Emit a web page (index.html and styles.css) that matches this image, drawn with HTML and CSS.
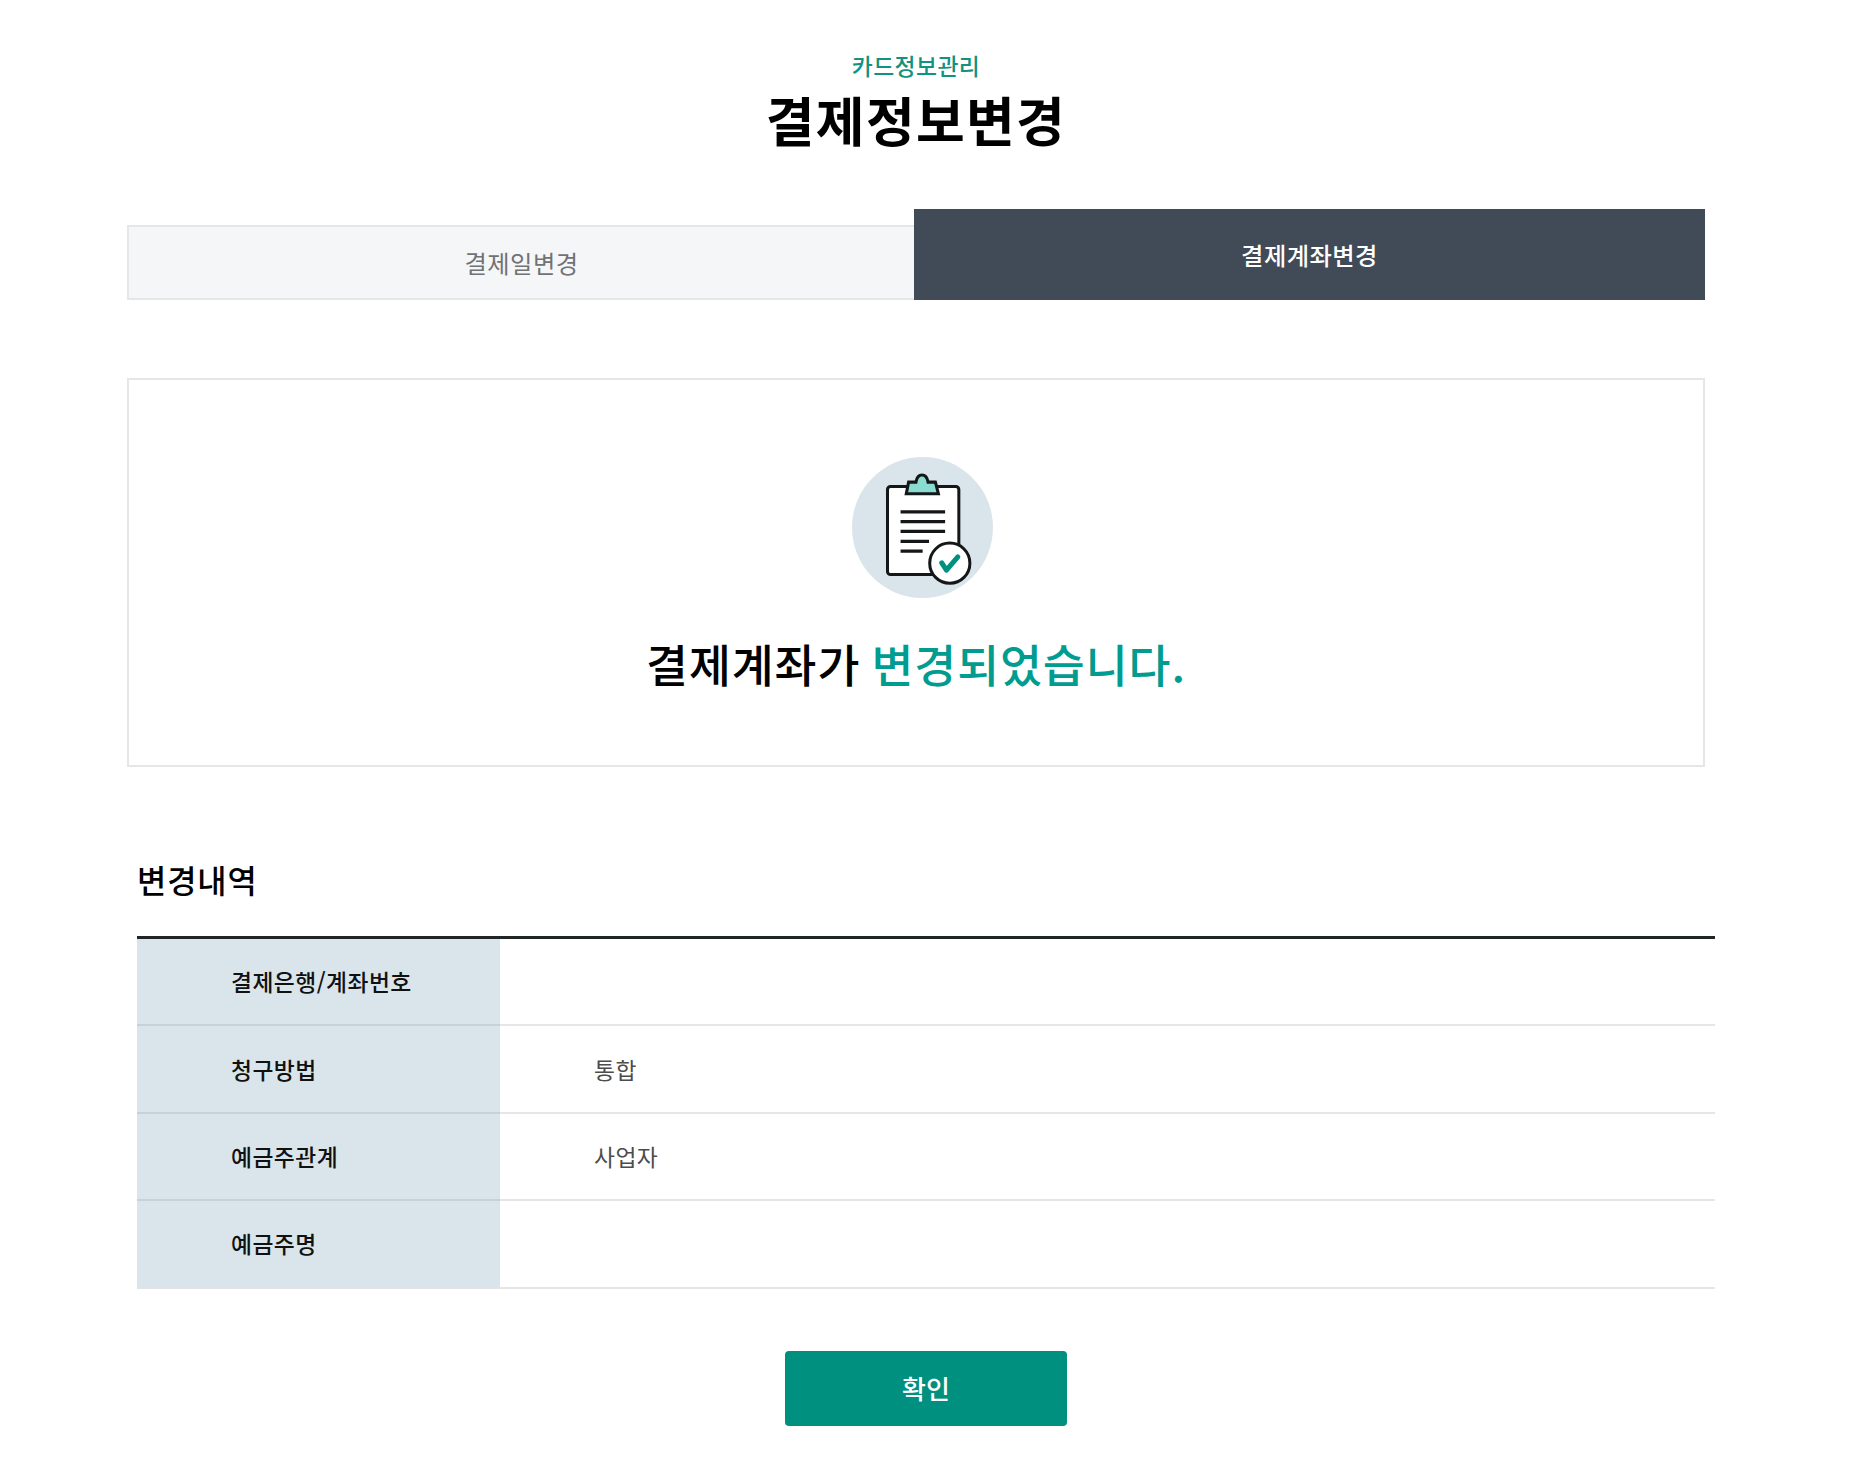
FILE: index.html
```html
<!DOCTYPE html>
<html lang="ko">

<head>
    <meta charset="UTF-8">
    <meta name="viewport" content="width=device-width, initial-scale=1.0">
    <title>결제정보변경</title>
    <link rel="stylesheet" href="styles.css">
</head>

<body>

    <div class="container">
        <header class="page-header">
            <p class="category">카드정보관리</p>
            <h1>결제정보변경</h1>
        </header>

        <nav>
            <ul class="tabs">
                <li><a href="#">결제일변경</a></li>
                <li class="active"><a href="#">결제계좌변경</a></li>
            </ul>
        </nav>

        <!-- 변경 완료 안내 -->
        <div class="result-box">
            <svg class="result-icon" viewBox="35 38 421 421" aria-hidden="true">
                <circle cx="245.500" cy="248.500" r="210.500" fill="#dae5eb"/>
                <g stroke="#141718" stroke-width="9">
                    <rect x="141" y="126" width="213" height="263" rx="9" fill="#fff"/>
                    <path d="M197 148 L204 113 H226 C228 101 232 92 244 92 C256 92 260 101 262 113 H284 L293 148 Z" fill="#8adcd0"/>
                    <path d="M180 202 H313 M180 231 H313 M180 260 H313 M180 290 H265 M180 319 H246" stroke-width="10" fill="none"/>
                    <circle cx="327" cy="355" r="60" fill="#fff"/>
                </g>
                <path d="M303 354 L317 376 L351 336" fill="none" stroke="#00907f" stroke-width="15" stroke-linecap="round" stroke-linejoin="round"/>
            </svg>
            <p class="result-text">결제계좌가 <strong>변경되었습니다.</strong></p>
        </div>

        <!-- 변경내역 -->
        <section class="detail">
            <h2>변경내역</h2>
            <table>
                <tbody>
                    <tr>
                        <th scope="row">결제은행/계좌번호</th>
                        <td></td>
                    </tr>
                    <tr>
                        <th scope="row">청구방법</th>
                        <td>통합</td>
                    </tr>
                    <tr>
                        <th scope="row">예금주관계</th>
                        <td>사업자</td>
                    </tr>
                    <tr>
                        <th scope="row">예금주명</th>
                        <td></td>
                    </tr>
                </tbody>
            </table>
            <button type="button" class="confirm-btn">확인</button>
        </section>
    </div>

</body>

</html>
```

FILE: styles.css
```css
* {
    box-sizing: border-box;
}

body {
    font-family: 'Noto Sans CJK KR', 'Noto Sans', sans-serif;
    background-color: #fff;
    margin: 0;
    color: #000;
    letter-spacing: 0.45px;
}

h1,
h2,
p {
    margin: 0;
}

.container {
    width: 1578px;
    margin-left: 127px;
    padding-top: 49px;
}

.page-header {
    height: 160px;
    text-align: center;
}

.category {
    color: #12927f;
    font-size: 22.800px;
    font-weight: 500;
    line-height: 33px;
}

h1 {
    font-size: 53px;
    font-weight: 700;
    letter-spacing: 1.300px;
    line-height: 74px;
}

.tabs {
    display: flex;
    align-items: flex-end;
    list-style: none;
    margin: 0;
    padding: 0;
}

.tabs li {
    width: 787px;
    height: 75px;
    background-color: #f5f6f8;
    border: 2px solid #e5e6e6;
    border-right: none;
}

.tabs a {
    display: block;
    color: #707274;
    font-size: 24.300px;
    line-height: 71px;
    text-align: center;
    text-decoration: none;
}

.tabs .active {
    width: 791px;
    height: 91px;
    background-color: #414b57;
    border: none;
}

.tabs .active a {
    color: #fff;
    font-weight: 500;
    line-height: 91px;
}

.result-box {
    display: flex;
    flex-direction: column;
    align-items: center;
    height: 389px;
    margin-top: 78px;
    padding-top: 77px;
    border: 2px solid #e5e6e6;
}

.result-icon {
    width: 141px;
    height: 141px;
    margin-left: 12px;
}

.result-text {
    margin-top: 31px;
    font-size: 45.600px;
    font-weight: 500;
    letter-spacing: 0.9px;
    word-spacing: -2.500px;
    line-height: 69px;
}

.result-text strong {
    color: #009c90;
    font-weight: 500;
}

.detail {
    width: 1578px;
    margin: 93px 0 0 10px;
}

.detail h2 {
    font-size: 31.800px;
    font-weight: 500;
    letter-spacing: 0.9px;
    line-height: 39px;
}

table {
    width: 100%;
    margin-top: 37px;
    border-top: 3px solid #1f2625;
    border-spacing: 0;
}

th,
td {
    height: 87.400px;
    padding: 0 0 0 94px;
    border-bottom: 2px solid #e5e6e6;
    font-size: 22.800px;
    text-align: left;
}

th {
    width: 363px;
    background-color: #dae5eb;
    border-color: #c5d2d9;
    color: #111;
    font-weight: 500;
}

tr:last-child th {
    border-color: #e0e4e6;
}

td {
    color: #4c4c4c;
    font-weight: 400;
}

.confirm-btn {
    display: block;
    width: 282px;
    height: 75px;
    margin: 62px auto 0;
    padding: 0 0 2px;
    background-color: #00907f;
    border: none;
    border-radius: 4px;
    color: #fff;
    font-family: inherit;
    font-size: 26px;
    font-weight: 500;
    cursor: pointer;
}
```
